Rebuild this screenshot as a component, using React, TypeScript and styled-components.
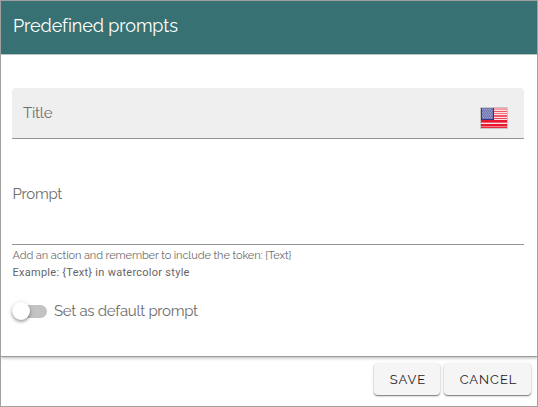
import React from "react";
import styled, { createGlobalStyle } from "styled-components";

const GlobalStyle = createGlobalStyle`
  *, *::before, *::after { box-sizing: border-box; }
  body { margin: 0; background: #fff; }
`;

const Dialog = styled.div`
  width: 538px;
  height: 407px;
  display: flex;
  flex-direction: column;
  border: 1px solid #a0a0a0;
  background: #fff;
  color: #6e6e6e;
  font-family: Raleway, Lato, sans-serif;
  overflow: hidden;
`;

const Header = styled.header`
  height: 54px;
  flex: none;
  padding: 13px 12px 0;
  background: #377174;
  border-bottom: 1px solid #c6cccc;
`;

const Heading = styled.h1`
  margin: 0;
  color: #fff;
  font-size: 18px;
  font-weight: 400;
  line-height: 24px;
  letter-spacing: -0.08px;
`;

const Content = styled.main`
  height: 302px;
  flex: none;
  display: flex;
  flex-direction: column;
  padding: 33px 13px 0 11px;
  border-bottom: 1px solid #9c9c9c;
  box-shadow: 0 1px 3px rgba(0, 0, 0, 0.3);
`;

const TitleField = styled.label`
  height: 51px;
  display: flex;
  align-items: center;
  justify-content: space-between;
  padding: 0 16px 0 11px;
  border-bottom: 1px solid #949494;
  border-radius: 4px 4px 0 0;
  background: #efefef;
`;

const PromptField = styled.label`
  height: 61px;
  margin-top: 45px;
  padding-left: 0.5px;
  border-bottom: 1px solid #949494;
`;

const FieldLabel = styled.span<{ $spacing: string }>`
  display: block;
  font-size: 15px;
  line-height: 20px;
  letter-spacing: ${({ $spacing }) => $spacing};
`;

const Flag = styled.svg`
  display: block;
  margin-top: 9px;
`;

const Hint = styled.p`
  margin: 2px 0 0;
  padding-left: 0.5px;
  font-size: 11px;
  line-height: 17px;
  letter-spacing: -0.1px;
`;

const Example = styled.p`
  margin: 0;
  padding-left: 0.5px;
  color: #666;
  font-family: Roboto, sans-serif;
  font-size: 11px;
  line-height: 17px;
  letter-spacing: 0.27px;
`;

const SwitchRow = styled.label`
  display: flex;
  align-items: center;
  gap: 7px;
  height: 22px;
  margin-top: 19px;
`;

const Track = styled.span`
  width: 35px;
  height: 13px;
  display: flex;
  align-items: center;
  border-radius: 7px;
  background: #c3c3c3;
`;

const Thumb = styled.span`
  width: 18px;
  height: 18px;
  border-radius: 50%;
  background: #fff;
  box-shadow: 0 2px 3px rgba(0, 0, 0, 0.28), 0 1px 5px rgba(0, 0, 0, 0.16);
`;

const Actions = styled.footer`
  display: flex;
  justify-content: flex-end;
  gap: 4px;
  padding: 6px 6px 0;
`;

const Button = styled.button<{ $width: number }>`
  width: ${({ $width }) => $width}px;
  height: 32px;
  padding: 2px 0 0 2px;
  border: 0;
  border-radius: 4px;
  background: #f5f5f5;
  color: #1c1c1c;
  font: 400 13px/20px Raleway, Lato, sans-serif;
  letter-spacing: 0.95px;
  box-shadow: 0 1px 1px rgba(0, 0, 0, 0.4), 0 1px 3px rgba(0, 0, 0, 0.22);
`;

const stripes = [
  { y: 1, height: 2, color: "#f79ea5" },
  { y: 4, height: 1, color: "#ee5765" },
  { y: 6, height: 1, color: "#f27581" },
  { y: 8, height: 2, color: "#ed5968" },
  { y: 11, height: 1, color: "#ee4356" },
  { y: 13, height: 2, color: "#e91934" },
  { y: 15, height: 1, color: "#ee5a6b" },
  { y: 17, height: 2, color: "#e91934" },
  { y: 19, height: 1, color: "#f27884" },
  { y: 20, height: 1, color: "#e92b42" },
];
const stars = Array.from({ length: 30 }, (_, i) => ({
  x: 2 + (i % 5) * 2 + (Math.floor(i / 5) % 2),
  y: 2 + Math.floor(i / 5) * 1.6,
}));

function UnitedStatesFlag() {
  return (
    <Flag width="28" height="22" viewBox="0 0 28 22" aria-label="English">
      <rect width="28" height="22" rx="1" fill="#c7c5c5" />
      <rect x="1" y="1" width="26" height="20" fill="#fbe3e5" />
      {stripes.map(({ y, height, color }) => (
        <rect key={y} x="1" y={y} width="26" height={height} fill={color} />
      ))}
      <rect x="1" y="1" width="13" height="12" fill="#2f398a" />
      <rect x="2" y="1" width="11" height="11" fill="#7378b3" />
      {stars.map(({ x, y }) => (
        <rect key={`${x}-${y}`} x={x} y={y} width="1" height="1" fill="#a4a8d0" />
      ))}
    </Flag>
  );
}

export default function App() {
  return (
    <>
      <GlobalStyle />
      <Dialog>
        <Header><Heading>Predefined prompts</Heading></Header>
        <Content>
          <TitleField>
            <FieldLabel $spacing="-0.2px">Title</FieldLabel>
            <UnitedStatesFlag />
          </TitleField>
          <PromptField><FieldLabel $spacing="-0.27px">Prompt</FieldLabel></PromptField>
          <Hint>Add an action and remember to include the token: {"{Text}"}</Hint>
          <Example>Example: {"{Text}"} in watercolor style</Example>
          <SwitchRow>
            <Track><Thumb /></Track>
            <FieldLabel $spacing="-0.3px">Set as default prompt</FieldLabel>
          </SwitchRow>
        </Content>
        <Actions>
          <Button $width={66}>SAVE</Button>
          <Button $width={87}>CANCEL</Button>
        </Actions>
      </Dialog>
    </>
  );
}
